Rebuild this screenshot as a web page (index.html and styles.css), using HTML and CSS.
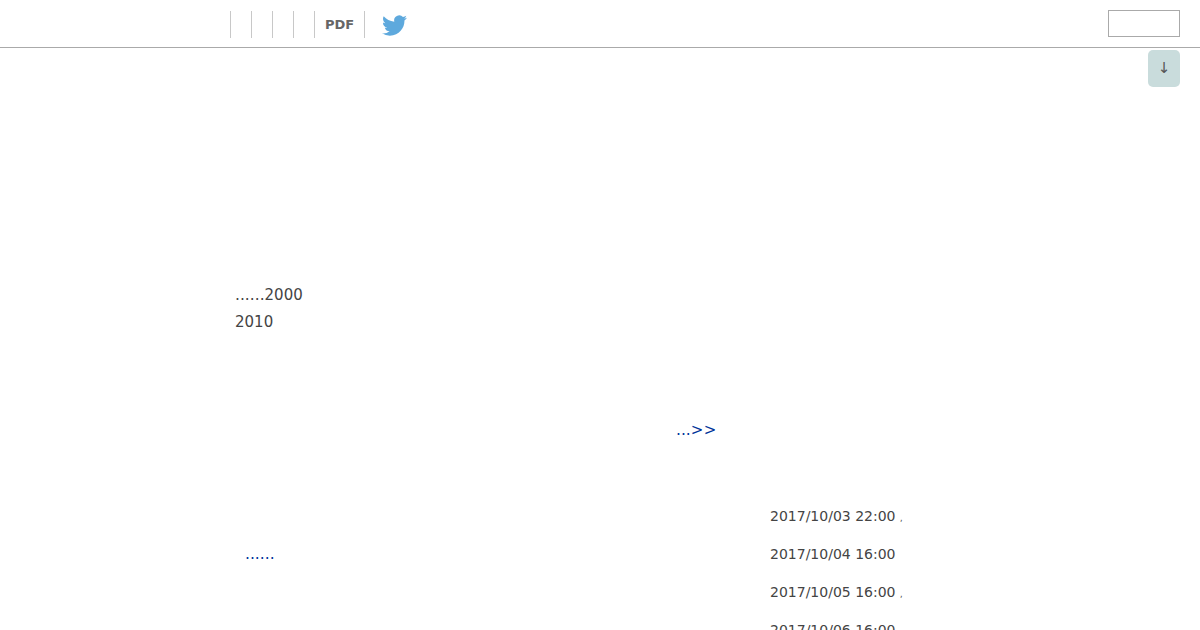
FILE: index.html
```html
<!DOCTYPE html>
<html lang="en">
<head>
    <meta charset="UTF-8">
    <meta name="viewport" content="width=device-width, initial-scale=1.0">
    <title>PDF</title>
    <link rel="stylesheet" href="styles.css">
</head>
<body>
    <div class="header">
        <div class="nav">
            <a class="nav-item"></a>
            <a class="nav-item"></a>
            <a class="nav-item"></a>
            <a class="nav-item"></a>
            <a class="nav-item pdf">PDF</a>
            <a class="twitter">
                <svg width="25" height="25" viewBox="0 0 24 24"><path fill="#5ea9dd" d="M23.953 4.57a10 10 0 01-2.825.775 4.958 4.958 0 002.163-2.723c-.951.555-2.005.959-3.127 1.184a4.92 4.92 0 00-8.384 4.482C7.69 8.095 4.067 6.13 1.64 3.162a4.822 4.822 0 00-.666 2.475c0 1.71.87 3.213 2.188 4.096a4.904 4.904 0 01-2.228-.616v.06a4.923 4.923 0 003.946 4.827 4.996 4.996 0 01-2.212.085 4.936 4.936 0 004.604 3.417 9.867 9.867 0 01-6.102 2.105c-.39 0-.779-.023-1.17-.067a13.995 13.995 0 007.557 2.209c9.053 0 13.998-7.496 13.998-13.985 0-.21 0-.42-.015-.63A9.935 9.935 0 0024 4.59z"/></svg>
            </a>
        </div>
        <input class="search" type="text">
    </div>
    <a class="to-bottom">↓</a>

    <div class="content">
        <div class="intro">
            <p><span class="dots">......</span>2000</p>
            <p>2010</p>
        </div>
        <div class="more"><a><span class="dots">...</span><span class="more-link">&gt;&gt;</span></a></div>
        <div class="lower">
            <div class="lower-left"><a><span class="dots">......</span></a></div>
            <ul class="dates">
                <li>2017/10/03 22:00 <span class="mark">,</span></li>
                <li>2017/10/04 16:00</li>
                <li>2017/10/05 16:00 <span class="mark">,</span></li>
                <li>2017/10/06 16:00</li>
            </ul>
        </div>
    </div>
</body>
</html>
```

FILE: styles.css
```css
html, body {
    height: 630px;
    overflow: hidden;
}

body {
    font-family: "DejaVu Sans", sans-serif;
    background-color: #FFFFFF;
    color: #444444;
    margin: 0;
    padding: 0;
    position: relative;
}

.header {
    display: flex;
    justify-content: space-between;
    align-items: flex-start;
    height: 47px;
    border-bottom: 1px solid #aaaaaa;
    padding: 0 20px 0 230px;
}

.nav {
    display: flex;
    align-items: flex-start;
    padding-top: 11px;
}

.nav-item {
    display: block;
    width: 20px;
    height: 27px;
    border-left: 1px solid #c8c8c8;
}

.pdf {
    width: auto;
    padding: 0 10px;
    border-right: 1px solid #c8c8c8;
    color: #666666;
    font-size: 13px;
    font-weight: bold;
    line-height: 27px;
}

.twitter {
    display: block;
    margin: 2px 0 0 17px;
}

.search {
    width: 72px;
    height: 27px;
    margin-top: 10px;
    padding: 0;
    box-sizing: border-box;
    border: 1px solid #aaaaaa;
    background-color: #FFFFFF;
}

.to-bottom {
    position: absolute;
    top: 50px;
    right: 20px;
    width: 32px;
    height: 37px;
    border-radius: 5px;
    background-color: #c9dcdc;
    color: #555555;
    font-size: 15px;
    line-height: 36px;
    text-align: center;
}

.content {
    padding-left: 235px;
}

.intro {
    padding-top: 234px;
}

.intro p {
    margin: 0;
    font-size: 15px;
    line-height: 27px;
}

.dots {
    font-size: 15.5px;
}

.more {
    margin-top: 81px;
    padding-left: 441px;
    font-size: 15px;
    line-height: 27px;
    color: #003399;
}

.more-link {
    font-size: 15px;
    letter-spacing: 0.3px;
}

.lower {
    display: flex;
    margin-top: 53px;
}

.lower-left {
    width: 535px;
    padding: 38px 0 0 10px;
    box-sizing: border-box;
    font-size: 15px;
    line-height: 38px;
    color: #003399;
}

.dates {
    list-style: none;
    margin: 0;
    padding: 0;
    font-size: 14px;
    line-height: 38px;
}

.dates li {
    height: 38px;
}

.mark {
    font-size: 8px;
}
```
